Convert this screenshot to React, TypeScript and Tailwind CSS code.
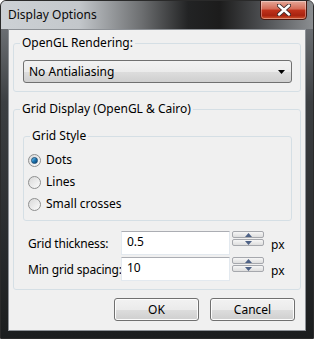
import React from "react";

const font = { fontFamily: '"Noto Sans", "Open Sans", sans-serif' };

const Radio = ({ checked, label }: { checked?: boolean; label: string }) => (
  <label className="flex items-center h-[22px] gap-[5px] pl-[4px]">
    <span className="w-[13px] h-[13px] rounded-full border border-[#8e8f8f] bg-gradient-to-br from-[#d9d9d9] to-[#fbfbfb] flex items-center justify-center">
      {checked && (
        <span className="w-[7px] h-[7px] rounded-full bg-gradient-to-br from-[#7ad0f5] via-[#1c78b5] to-[#0c3f6b] border border-[#1a4d78]" />
      )}
    </span>
    <span>{label}</span>
  </label>
);

const Spinner = () => (
  <div className="flex flex-col gap-[1px] w-[32px] ml-[2px] self-start shrink-0">
    <div className="h-[7px] border border-[#a6a8ad] rounded-[2px] bg-gradient-to-b from-[#f6f6f6] to-[#dedede] flex items-center justify-center">
      <svg width="7" height="4" viewBox="0 0 7 4">
        <path d="M3.5 0 L7 4 L0 4 Z" fill="#4d6185" />
      </svg>
    </div>
    <div className="h-[7px] border border-[#a6a8ad] rounded-[2px] bg-gradient-to-b from-[#f6f6f6] to-[#dedede] flex items-center justify-center">
      <svg width="7" height="4" viewBox="0 0 7 4">
        <path d="M0 0 L7 0 L3.5 4 Z" fill="#4d6185" />
      </svg>
    </div>
  </div>
);

const NumberRow = ({ label, value }: { label: string; value: string }) => (
  <div className="flex items-center h-[24px]">
    <span className="w-[97px] shrink-0 whitespace-nowrap pl-[4px] pt-[2px] tracking-[-0.2px]">{label}</span>
    <div className="w-[109px] shrink-0 h-[24px] bg-white border border-[#e3e9ef] border-t-[#abadb3] pl-[5px] pt-[1px] leading-[18px]">
      {value}
    </div>
    <Spinner />
    <span className="ml-[7px] pt-[3px]">px</span>
  </div>
);

const Button = ({ children }: { children: React.ReactNode }) => (
  <button className="w-[85px] h-[23px] rounded-[3px] border border-[#707070] bg-[linear-gradient(to_bottom,#f2f2f2_0%,#ebebeb_50%,#dddddd_51%,#cfcfcf_100%)] text-[12px] text-black shadow-[inset_0_0_0_1px_#fcfcfc]">
    {children}
  </button>
);

export default function App() {
  return (
    <div
      className="w-[314px] h-[339px] flex flex-col rounded-t-[6px] border border-[#2a2a2a] bg-[linear-gradient(to_bottom,#7c8085_0%,#3c3f42_30%,#1b1d1e_100%)] text-[12px] text-black overflow-hidden"
      style={font}
    >
      <div className="h-[28px] flex justify-between bg-[linear-gradient(to_right,#cdd1d5_0%,#c3c7cb_25%,#6d6f71_45%,#222324_60%,#1c1c1c_70%,#515356_85%,#8b8e91_100%)]">
        <span className="pl-[7px] pt-[6px] text-[12px] leading-[16px] text-[#0a0a0a]">Display Options</span>
        <div className="mr-[6px] w-[47px] h-[20px] -mt-px rounded-b-[4px] border border-[#4a1810] bg-[linear-gradient(to_bottom,#e5a898_0%,#d46a55_45%,#c0331c_50%,#a8230f_80%,#d0542e_100%)] flex items-center justify-center shadow-[inset_0_0_0_1px_rgba(255,255,255,0.35)]">
          <svg width="14" height="12" viewBox="0 0 14 12">
            <path d="M2 1.5 L12 10.5 M12 1.5 L2 10.5" stroke="#3a2a2a" strokeWidth="4.2" strokeLinecap="round" />
            <path d="M2 1.5 L12 10.5 M12 1.5 L2 10.5" stroke="#ffffff" strokeWidth="2.4" strokeLinecap="round" />
          </svg>
        </div>
      </div>

      <div className="mx-[7px] mb-[7px] flex-1 bg-[#f0f0f0] border border-[#8d9196] flex flex-col px-[4px]">
        <fieldset className="mt-[5px] border border-[#d5dfe5] rounded-[3px] pb-[8px] px-0">
          <legend className="ml-[6px] px-[2px] leading-[16px]">OpenGL Rendering:</legend>
          <div className="mt-[9px] ml-[9px] mr-[8px] h-[23px] rounded-[3px] border border-[#707070] bg-[linear-gradient(to_bottom,#f2f2f2_0%,#ebebeb_50%,#dddddd_51%,#cfcfcf_100%)] flex items-center justify-between pl-[5px] pr-[6px]">
            <span>No Antialiasing</span>
            <svg width="7" height="4" viewBox="0 0 7 4">
              <path d="M0 0 L7 0 L3.5 4 Z" fill="#000" />
            </svg>
          </div>
        </fieldset>

        <fieldset className="mt-[9px] border border-[#d5dfe5] rounded-[3px] pb-[8px] px-0">
          <legend className="ml-[6px] px-[2px] leading-[16px]">Grid Display (OpenGL &amp; Cairo)</legend>
          <fieldset className="mt-[11px] ml-[9px] mr-[8px] border border-[#d5dfe5] rounded-[3px] pb-[5px] px-0">
            <legend className="ml-[6px] px-[2px] leading-[16px]">Grid Style</legend>
            <div className="mt-[5px] flex flex-col">
              <Radio checked label="Dots" />
              <Radio label="Lines" />
              <Radio label="Small crosses" />
            </div>
          </fieldset>
          <div className="mt-[10px] flex flex-col gap-[2px] pl-[10px]">
            <NumberRow label="Grid thickness:" value="0.5" />
            <NumberRow label="Min grid spacing:" value="10" />
          </div>
        </fieldset>

        <div className="mt-[8px] flex justify-end gap-[11px] pr-[6px]">
          <Button>OK</Button>
          <Button>Cancel</Button>
        </div>
      </div>
    </div>
  );
}
